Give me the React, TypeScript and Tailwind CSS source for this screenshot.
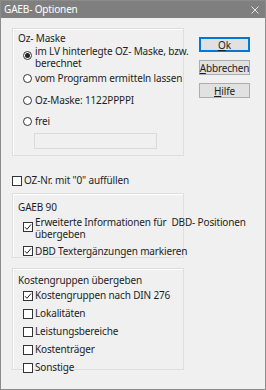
import React from 'react';

const Radio: React.FC<{ checked?: boolean }> = ({ checked }) => (
  <span className="flex h-[9px] w-[9px] shrink-0 items-center justify-center rounded-full border border-[#333] bg-white">
    {checked && <span className="h-[5px] w-[5px] rounded-full bg-[#222]" />}
  </span>
);

const Check: React.FC<{ checked?: boolean }> = ({ checked }) => (
  <span className="flex h-[10px] w-[10px] shrink-0 items-center justify-center border border-[#333] bg-white">
    {checked && (
      <svg width="8" height="8" viewBox="0 0 8 8">
        <path d="M1 4.2 L3 6.3 L7 1.5" fill="none" stroke="#222" strokeWidth="1" />
      </svg>
    )}
  </span>
);

const Group: React.FC<{ title: string; className?: string; children: React.ReactNode }> = ({ title, className, children }) => (
  <div className={`border border-[#dedede] shadow-[inset_1px_1px_0_#fff] ${className ?? ''}`}>
    <div className="pl-[5px] leading-[12px]">{title}</div>
    {children}
  </div>
);

const Button: React.FC<{ hot: string; rest: string; primary?: boolean }> = ({ hot, rest, primary }) => (
  <button
    className={`flex h-[15px] w-[51px] items-center justify-center border bg-[#e1e1e1] leading-none ${
      primary ? 'border-[#0078d7] shadow-[inset_0_0_0_1px_#0078d7]' : 'border-[#adadad]'
    }`}
  >
    <span className="underline decoration-[0.5px] underline-offset-[1px]">{hot}</span>
    {rest}
  </button>
);

export default function App() {
  return (
    <div className="flex h-[390px] w-[266px] flex-col border border-[#8c8c8c] bg-[#f0f0f0] font-['Segoe_UI','Noto_Sans',sans-serif] text-[10px] tracking-[-0.15px] text-[#1e1e1e]">
      {/* Title bar */}
      <div className="flex h-[17px] shrink-0 items-center justify-between bg-[#7f7f7f] pl-[3px] pr-[6px] text-white">
        <span className="text-[10px]">GAEB- Optionen</span>
        <svg width="8" height="8" viewBox="0 0 8 8">
          <path d="M0.5 0.5 L7.5 7.5 M7.5 0.5 L0.5 7.5" stroke="#e6e6e6" strokeWidth="1" />
        </svg>
      </div>

      <div className="flex flex-1 pl-[11px] pt-[10px]">
        {/* Left column */}
        <div className="flex w-[172px] flex-col whitespace-nowrap">
          <Group title="Oz- Maske" className="h-[128px] pt-[3px]">
            <div className="mt-[1px] flex flex-col pl-[10px] leading-[12px]">
              <label className="flex gap-[3px]">
                <span className="pt-[6px]"><Radio checked /></span>
                <span>im LV hinterlegte OZ- Maske, bzw.<br />berechnet</span>
              </label>
              <label className="mt-[3px] flex items-center gap-[3px]">
                <Radio />
                <span>vom Programm ermitteln lassen</span>
              </label>
              <label className="mt-[10px] flex items-center gap-[3px]">
                <Radio />
                <span>Oz-Maske: 1122PPPPI</span>
              </label>
              <label className="mt-[9px] flex items-center gap-[3px]">
                <Radio />
                <span>frei</span>
              </label>
              <div className="ml-[11px] mt-[6px] h-[16px] w-[123px] border border-[#dadada] bg-[#f0f0f0]" />
            </div>
          </Group>

          <label className="mt-[19px] flex items-center gap-[2px] leading-[11px]">
            <Check />
            <span>OZ-Nr. mit "0" auffüllen</span>
          </label>

          <Group title="GAEB 90" className="mt-[7px] h-[65px] pt-[7px]">
            <div className="mt-[3px] flex flex-col pl-[10px] leading-[12px]">
              <label className="flex gap-[2px]">
                <span className="pt-[6px]"><Check checked /></span>
                <span>Erweiterte Informationen für&nbsp; DBD- Positionen<br />übergeben</span>
              </label>
              <label className="mt-[5px] flex items-center gap-[2px]">
                <Check checked />
                <span>DBD Textergänzungen markieren</span>
              </label>
            </div>
          </Group>

          <Group title="Kostengruppen übergeben" className="mt-[10px] h-[102px] pt-[5px]">
            <div className="mt-[4px] flex flex-col gap-[7px] pl-[10px] leading-[11px]">
              <label className="flex items-center gap-[2px]">
                <Check checked />
                <span>Kostengruppen nach DIN 276</span>
              </label>
              <label className="flex items-center gap-[2px]">
                <Check />
                <span>Lokalitäten</span>
              </label>
              <label className="flex items-center gap-[2px]">
                <Check />
                <span>Leistungsbereiche</span>
              </label>
              <label className="flex items-center gap-[2px]">
                <Check />
                <span>Kostenträger</span>
              </label>
              <label className="flex items-center gap-[2px]">
                <Check />
                <span>Sonstige</span>
              </label>
            </div>
          </Group>
        </div>

        {/* Buttons */}
        <div className="ml-[15px] mt-[9px] flex flex-col gap-[8px]">
          <Button hot="O" rest="k" primary />
          <Button hot="A" rest="bbrechen" />
          <Button hot="H" rest="ilfe" />
        </div>
      </div>
    </div>
  );
}
